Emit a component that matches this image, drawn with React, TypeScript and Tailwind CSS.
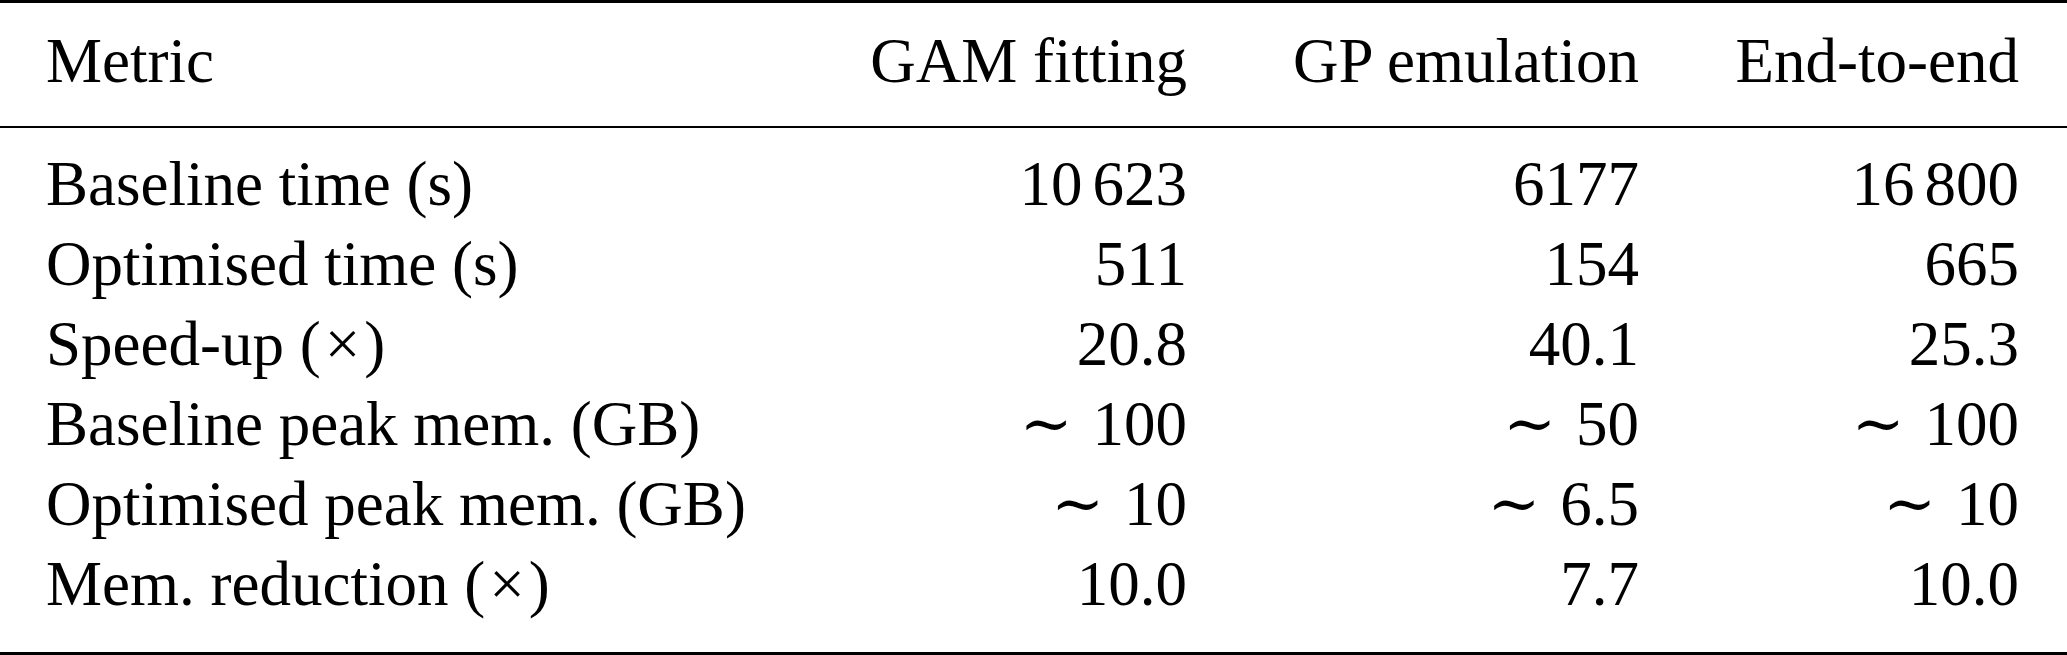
import type { ReactNode } from 'react';

type Row = {
  metric: ReactNode;
  gam: ReactNode;
  gp: ReactNode;
  total: ReactNode;
};

function Times() {
  return (
    <>
      (<span className="mx-[4px]">×</span>)
    </>
  );
}

function Approx({ value }: { value: string }) {
  return (
    <span>
      <span className="mr-[20px] font-[family-name:'DejaVu_Serif',serif] text-[63px] leading-none">∼</span>
      {value}
    </span>
  );
}

function Grouped({ head, tail }: { head: string; tail: string }) {
  return (
    <span>
      {head}
      <span className="ml-[10px]">{tail}</span>
    </span>
  );
}

const rows: Row[] = [
  {
    metric: 'Baseline time (s)',
    gam: <Grouped head="10" tail="623" />,
    gp: '6177',
    total: <Grouped head="16" tail="800" />
  },
  { metric: 'Optimised time (s)', gam: '511', gp: '154', total: '665' },
  {
    metric: (
      <>
        Speed-up <Times />
      </>
    ),
    gam: '20.8',
    gp: '40.1',
    total: '25.3'
  },
  {
    metric: 'Baseline peak mem. (GB)',
    gam: <Approx value="100" />,
    gp: <Approx value="50" />,
    total: <Approx value="100" />
  },
  {
    metric: 'Optimised peak mem. (GB)',
    gam: <Approx value="10" />,
    gp: <Approx value="6.5" />,
    total: <Approx value="10" />
  },
  {
    metric: (
      <>
        Mem. reduction <Times />
      </>
    ),
    gam: '10.0',
    gp: '7.7',
    total: '10.0'
  }
];

const gridCols = 'grid h-[80px] grid-cols-[729px_322px_362px_290px] gap-x-[90px] pl-[46px]';

export default function App() {
  return (
    <div className="h-[655px] w-[2067px] overflow-hidden bg-white font-[family-name:'Liberation_Serif','Times_New_Roman',serif] text-[63px] leading-[80px] text-black">
      <div className="border-y-[3px] border-black">
        <div className={`${gridCols} box-content pb-[25px] pt-[18px]`}>
          <div className="whitespace-nowrap">Metric</div>
          <div className="whitespace-nowrap text-right">GAM fitting</div>
          <div className="whitespace-nowrap text-right">GP emulation</div>
          <div className="whitespace-nowrap text-right">End-to-end</div>
        </div>

        <div className="border-t-2 border-black pb-[28px] pt-[16px]">
          {rows.map((row, index) => (
            <div key={index} className={gridCols}>
              <div className="whitespace-nowrap">{row.metric}</div>
              <div className="whitespace-nowrap text-right">{row.gam}</div>
              <div className="whitespace-nowrap text-right">{row.gp}</div>
              <div className="whitespace-nowrap text-right">{row.total}</div>
            </div>
          ))}
        </div>
      </div>
    </div>
  );
}
